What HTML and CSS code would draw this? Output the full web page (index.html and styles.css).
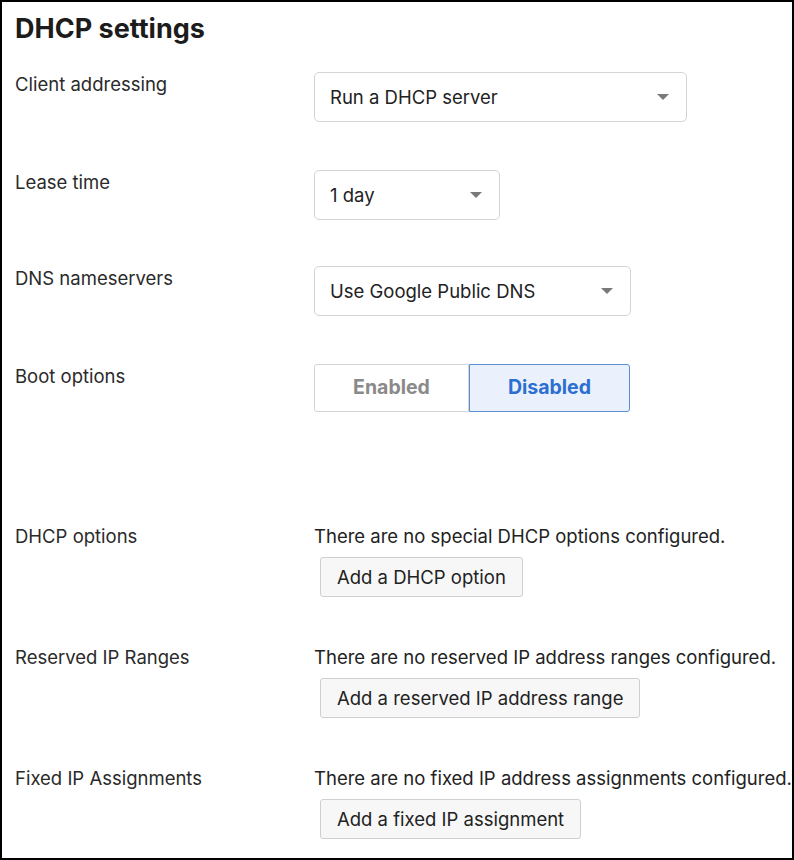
FILE: index.html
```html
<!DOCTYPE html>
<html lang="en">
<head>
  <meta charset="UTF-8" />
  <title>DHCP settings</title>
  <link rel="stylesheet" href="styles.css">
</head>
<body>
  <div class="page">
    <h1>DHCP settings</h1>

    <div class="field">
      <div class="label">Client addressing</div>
      <div class="select select-addressing">
        <span>Run a DHCP server</span>
        <span class="caret"></span>
      </div>
    </div>

    <div class="field">
      <div class="label">Lease time</div>
      <div class="select select-lease">
        <span>1 day</span>
        <span class="caret"></span>
      </div>
    </div>

    <div class="field field-dns">
      <div class="label">DNS nameservers</div>
      <div class="select select-dns">
        <span>Use Google Public DNS</span>
        <span class="caret"></span>
      </div>
    </div>

    <div class="field field-boot">
      <div class="label">Boot options</div>
      <div class="toggle">
        <button class="toggle-option">Enabled</button>
        <button class="toggle-option active">Disabled</button>
      </div>
    </div>

    <!-- Lists with nothing configured yet -->
    <div class="field info first-info">
      <div class="label">DHCP options</div>
      <div class="info-body">
        <p>There are no special DHCP options configured.</p>
        <button class="add-btn">Add a DHCP option</button>
      </div>
    </div>

    <div class="field info">
      <div class="label">Reserved IP Ranges</div>
      <div class="info-body">
        <p>There are no reserved IP address ranges configured.</p>
        <button class="add-btn">Add a reserved IP address range</button>
      </div>
    </div>

    <div class="field info">
      <div class="label">Fixed IP Assignments</div>
      <div class="info-body">
        <p>There are no fixed IP address assignments configured.</p>
        <button class="add-btn">Add a fixed IP assignment</button>
      </div>
    </div>
  </div>
</body>
</html>
```

FILE: styles.css
```css
html, body {
  margin: 0;
  padding: 0;
}

body {
  background: #fff;
  color: #222;
  font-family: Inter, "Noto Sans", sans-serif;
  font-size: 18.5px;
}

.page {
  box-sizing: border-box;
  width: 794px;
  height: 860px;
  border: 2px solid #000;
  padding: 10px 13px 0 13px;
  overflow: hidden;
}

h1 {
  margin: 0;
  font-size: 27px;
  line-height: 34px;
  font-weight: 700;
  color: #1c1c1c;
}

.field {
  display: grid;
  grid-template-columns: 299px 1fr;
  align-items: start;
  margin-top: 26px;
}

.field + .field {
  margin-top: 48px;
}

.field.field-dns {
  margin-top: 46px;
}

.field.field-boot {
  margin-top: 48px;
}

.label {
  padding-top: 1px;
  line-height: 22px;
  color: #2a2a2a;
}

/* Dropdowns */
.select {
  box-sizing: border-box;
  height: 50px;
  border: 1px solid #d4d4d4;
  border-radius: 5px;
  padding: 0 17px 0 15px;
  display: flex;
  align-items: center;
  justify-content: space-between;
  color: #222;
}

.select-addressing { width: 373px; }
.select-lease { width: 186px; }
.select-dns { width: 317px; }

.caret {
  width: 0;
  height: 0;
  border-left: 6px solid transparent;
  border-right: 6px solid transparent;
  border-top: 6px solid #7a7a7a;
}

/* Enabled / Disabled switch */
.toggle {
  display: flex;
  width: 316px;
  height: 48px;
}

.toggle-option {
  box-sizing: border-box;
  font-family: inherit;
  font-size: 19.5px;
  font-weight: 700;
  background: #fff;
  color: #8a8a8a;
  border: 1px solid #d4d4d4;
  border-radius: 3px 0 0 3px;
  width: 155px;
  padding: 0 0 2px 0;
  cursor: pointer;
}

.toggle-option.active {
  width: 161px;
  background: #eaf1fd;
  color: #2b6fd1;
  border: 1px solid #5a8fd6;
  border-radius: 0 3px 3px 0;
}

/* Info rows */
.field.info {
  margin-top: 49px;
}

.field.first-info {
  margin-top: 113px;
}

.info .label {
  padding-top: 0;
}

.info-body p {
  margin: 0 0 10px 0;
  line-height: 22px;
  white-space: nowrap;
  color: #222;
}

.add-btn {
  margin-left: 6px;
  height: 40px;
  padding: 0 16px;
  font-family: inherit;
  font-size: 18.5px;
  color: #222;
  background: #f7f7f7;
  border: 1px solid #cfcfcf;
  border-radius: 3px;
  cursor: pointer;
}
```
